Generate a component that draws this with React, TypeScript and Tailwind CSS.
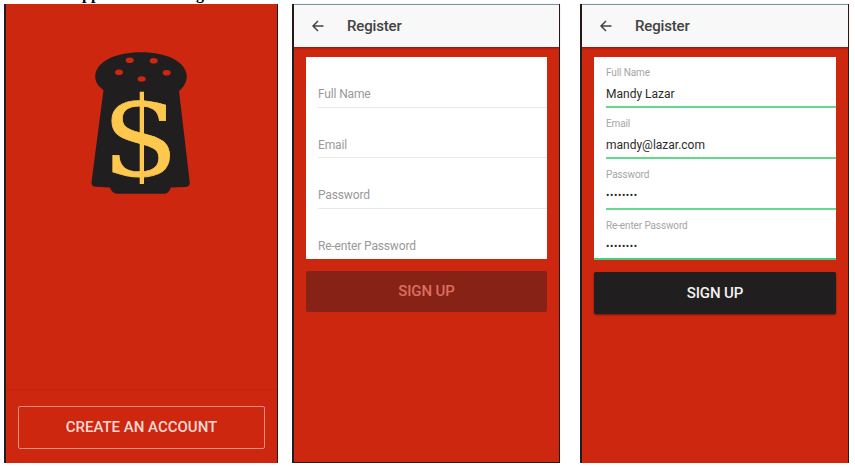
import type { ReactNode } from "react";

const labels = ["Full Name", "Email", "Password", "Re-enter Password"];
const values = ["Mandy Lazar", "mandy@lazar.com", "••••••••", "••••••••"];

function Shaker() {
  return (
    <svg className="ml-[84px] mt-[46px] block shrink-0" width="110" height="150" viewBox="0 0 110 150">
      <path
        d="M13.500 40 C8 36 5.200 32 5.200 26 C6 12 25 2.300 51 2.300 C77 2.300 96 12 96.800 26 C96.800 32 94 37 89 41 L99.700 132 Q100.200 137 95 137 L81 137.500 Q78.500 143.700 74.500 143.700 H27 Q22 143.500 20 137.500 L6 136.800 Q1 136.500 1.500 132 Z"
        fill="#201e1f"
      />
      <g fill="#cd2710">
        <ellipse cx="39.700" cy="10.300" rx="4" ry="2.800" />
        <ellipse cx="63.700" cy="10.700" rx="4" ry="2.800" />
        <ellipse cx="29" cy="22.300" rx="4" ry="2.800" />
        <ellipse cx="76.700" cy="22.700" rx="4" ry="2.800" />
        <ellipse cx="51.700" cy="29" rx="4" ry="2.800" />
      </g>
      <g fill="#fdc84d">
        <text
          transform="translate(50 125.800) scale(1.080 1)"
          textAnchor="middle"
          fontSize="101"
          stroke="#fdc84d"
          strokeWidth="0.800"
          fontFamily="DejaVu Serif, serif"
        >
          S
        </text>
        <rect x="49.700" y="41.700" width="4.300" height="92.300" />
      </g>
    </svg>
  );
}

function Phone({ className, children }: { className: string; children: ReactNode }) {
  return (
    <section className={`flex h-[459px] shrink-0 flex-col border-x border-[#251b1b] bg-[#cd2710] ${className}`}>
      {children}
    </section>
  );
}

function Register({ filled }: { filled: boolean }) {
  return (
    <Phone className={filled ? "ml-5 w-[269px] border-l-2" : "ml-[14px] w-[268px] border-b border-l-2"}>
      <header className="flex h-[43px] shrink-0 items-center border-t border-[#7895a8] bg-[#f8f8f8] pl-[17.500px] text-[#424242] shadow-[0_1px_2px_rgba(80,0,0,0.55)]">
        <svg width="12" height="12" viewBox="0 0 12 12" fill="none" stroke="currentColor" strokeWidth="1.500">
          <path d="M11.500 6H1M6 1 1 6l5 5" />
        </svg>
        <h1 className="ml-[23.500px] text-[15px] font-medium tracking-[-0.150px]">Register</h1>
      </header>
      <form className={`mx-3 mt-[10px] flex shrink-0 flex-col bg-white ${filled ? "h-[203px] border-b-2 border-[#42cf78]" : "h-[202px]"}`}>
        {labels.map((label, i) => (
          <div
            key={label}
            className={`ml-3 flex shrink-0 flex-col ${i === 3 ? "h-[48px]" : filled ? "h-[51px] border-b-2 border-[#63d98d]" : "h-[50.500px] border-b border-[#e8e8e8]"}`}
          >
            {filled ? (
              <>
                <span className="mt-[8px] h-[15px] text-[10px] leading-[15px] tracking-[-0.120px] text-[#a5a5a5]">{label}</span>
                <span className={i > 1 ? "mt-[6px] text-[10px] leading-4 tracking-[0.600px] text-[#252525]" : "mt-[6px] text-[12px] leading-4 text-[#2b2b2b]"}>{values[i]}</span>
              </>
            ) : (
              <span className="mt-[29px] text-[12px] leading-4 tracking-[-0.150px] text-[#999999]">{label}</span>
            )}
          </div>
        ))}
      </form>
      <button
        type="button"
        className={`mx-3 mt-3 shrink-0 rounded-[2px] text-[15px] font-medium tracking-[-0.100px] ${filled ? "h-[42px] bg-[#201e1f] text-[#f2f2f2] shadow-[0_1px_2px_#6d160b]" : "h-[41px] bg-[#872216] text-[#db6e62]"}`}
      >
        SIGN UP
      </button>
    </Phone>
  );
}

export default function App() {
  return (
    <main className="flex h-[467px] w-[855px] flex-col overflow-hidden bg-white font-['Roboto',sans-serif]">
      <div className="flex h-1 shrink-0 items-end overflow-hidden pl-[82px] font-['Liberation_Serif',serif] text-[16px] font-bold text-black">
        <span className="mb-px w-[114px] leading-[19px]">pp</span>
        <span className="mb-px leading-[19px]">g</span>
      </div>
      <div className="flex items-start">
        <Phone className="ml-1 w-[274px] border-l-2">
          <Shaker />
          <div className="mt-auto h-[74px] border-t border-[#c02510] px-3 pt-4">
            <button type="button" className="h-[43px] w-full rounded-[2px] border border-[#f08c7d] text-[15px] font-medium text-[#ffd9d2]">
              CREATE AN ACCOUNT
            </button>
          </div>
        </Phone>
        <Register filled={false} />
        <Register filled />
      </div>
    </main>
  );
}
